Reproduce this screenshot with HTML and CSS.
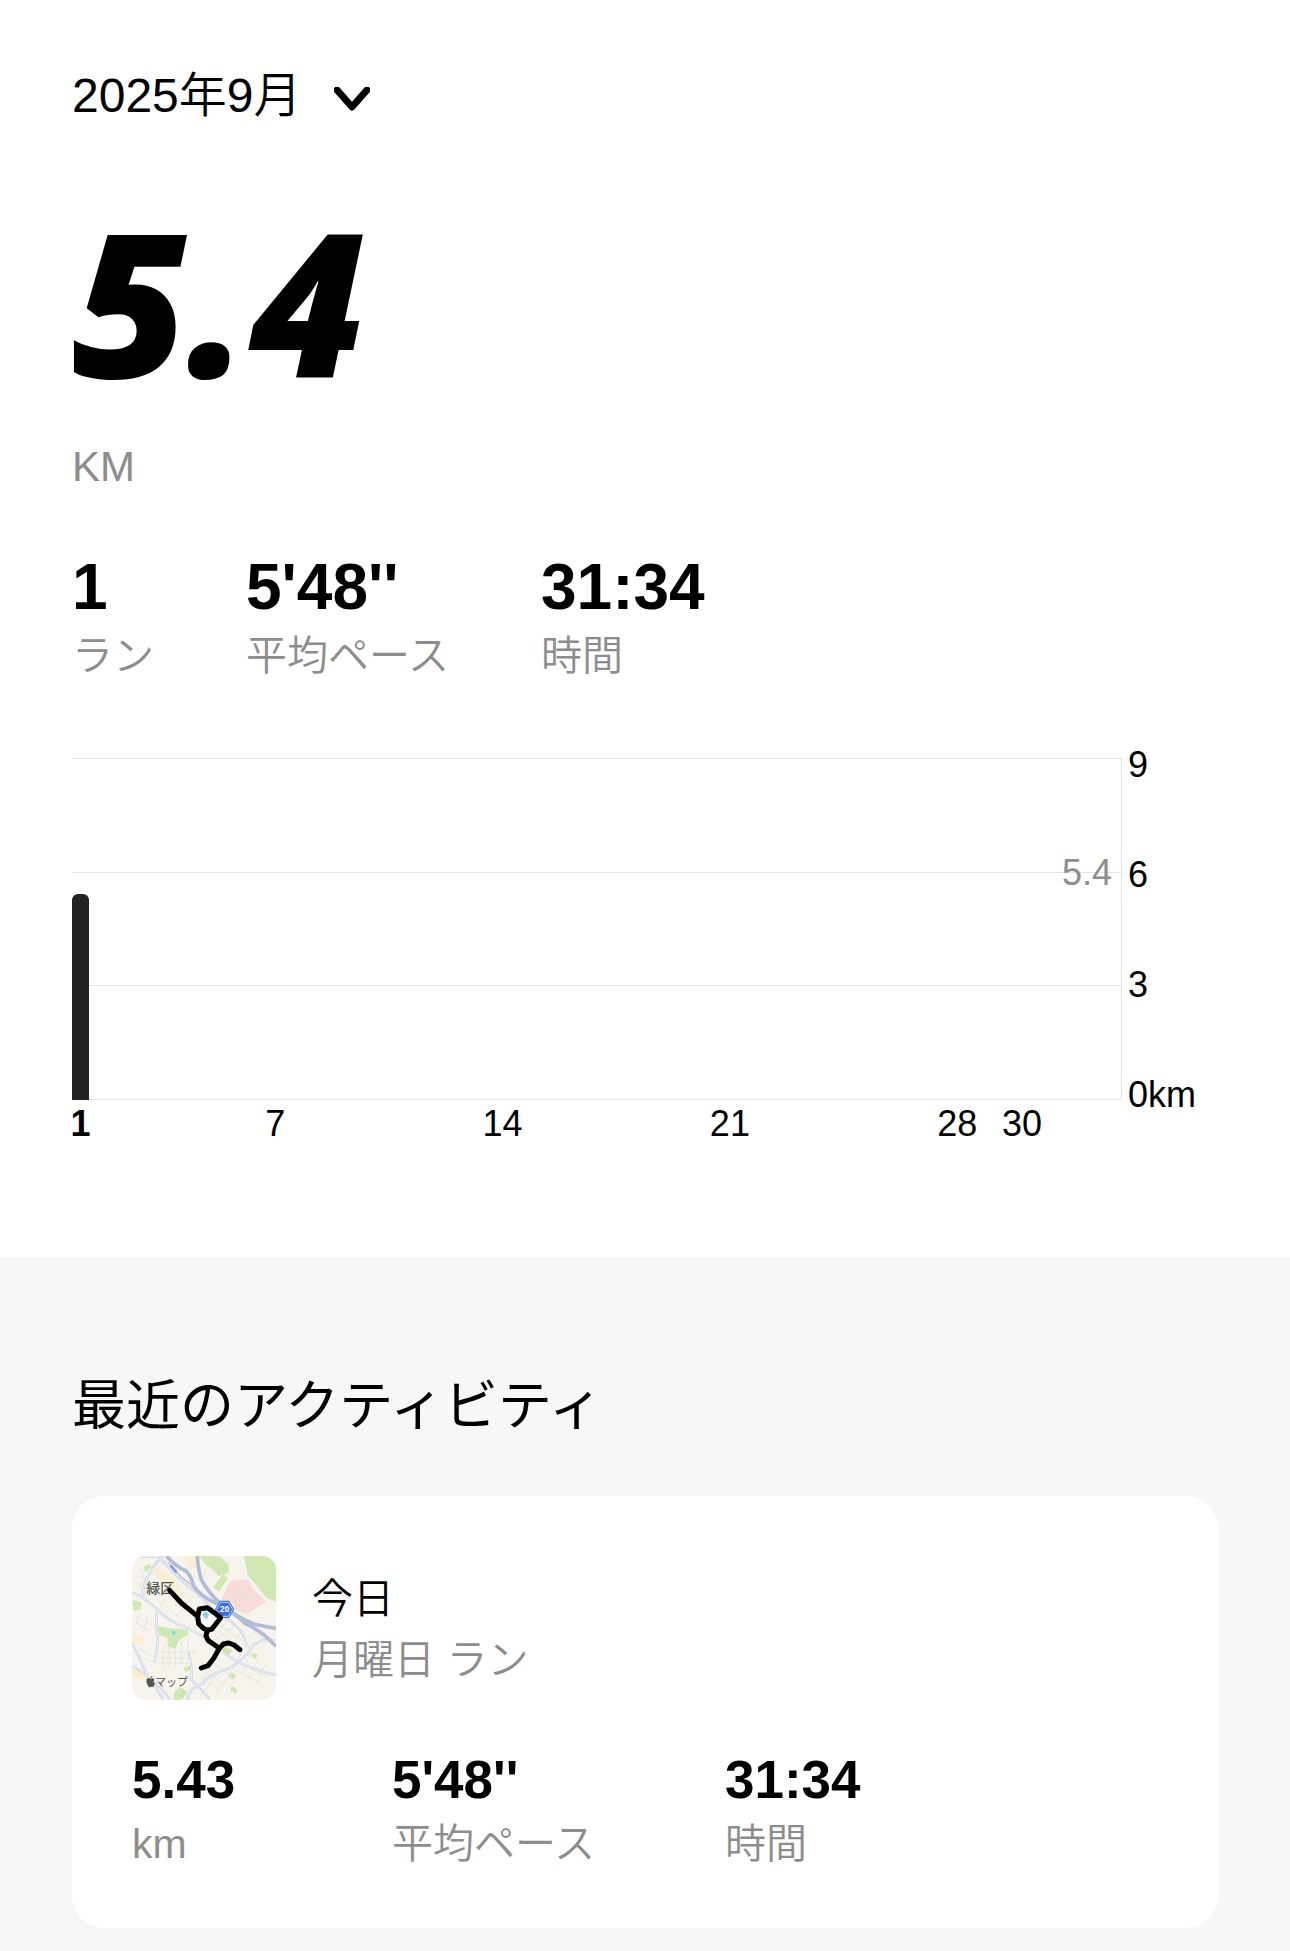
FILE: index.html
```html
<!DOCTYPE html>
<html lang="ja">

<head>
    <meta charset="UTF-8">
    <meta name="viewport" content="width=device-width, initial-scale=1.0">
    <title>アクティビティ</title>
    <link rel="stylesheet" href="styles.css">
</head>

<body>
    <section class="summary">
        <div class="month-picker">
            <select class="month-select" aria-label="月を選択">
                <option>2025年9月</option>
            </select>
            <svg class="chevron" viewBox="0 0 36 24" aria-hidden="true">
                <path d="M3 3 L18 20 L33 3" />
            </svg>
        </div>

        <div class="distance">5.4</div>
        <div class="distance-unit">KM</div>

        <div class="stats">
            <div class="stat">
                <div class="stat-value">1</div>
                <div class="stat-label">ラン</div>
            </div>
            <div class="stat">
                <div class="stat-value">5'48''</div>
                <div class="stat-label">平均ペース</div>
            </div>
            <div class="stat">
                <div class="stat-value">31:34</div>
                <div class="stat-label">時間</div>
            </div>
        </div>

        <div class="chart">
            <div class="plot">
                <div class="grid-row"></div>
                <div class="grid-row"><span class="average">5.4</span></div>
                <div class="grid-row"></div>
                <div class="bars"></div>
            </div>
            <div class="y-axis">
                <span>9</span>
                <span>6</span>
                <span>3</span>
                <span>0km</span>
            </div>
            <div class="x-axis"></div>
        </div>
    </section>

    <section class="recent">
        <h2 class="recent-title">最近のアクティビティ</h2>
        <div class="card">
            <div class="card-header">
                <svg class="map" viewBox="36 33 432 432" role="img" aria-label="ランのルート">
                    <rect x="36" y="33" width="432" height="432" fill="#f6f4ec" />
                    <!-- parks and blocks -->
                    <g fill="#cfe8b4">
                        <path d="M236 33 L300 33 L326 60 L326 84 L296 94 L276 72 L256 58 Z" />
                        <path d="M372 33 L468 33 L468 170 L440 158 L412 124 L384 92 Z" />
                        <path d="M310 88 L324 100 L296 140 L280 126 Z" />
                        <path d="M114 244 L152 250 L202 254 L206 268 L176 286 L166 312 L144 304 L142 278 L116 270 Z" />
                        <path d="M38 166 L64 172 L62 192 L42 198 Z" />
                        <path d="M72 64 L90 56 L94 70 L74 82 Z" />
                        <path d="M180 426 L204 440 L186 464 L160 464 L164 440 Z" />
                        <path d="M330 382 L350 390 L340 404 L326 396 Z" />
                        <path d="M336 424 L354 434 L346 446 L330 436 Z" />
                        <path d="M312 304 L338 314 L328 330 L308 322 Z" />
                        <path d="M400 322 L414 330 L406 342 L394 334 Z" />
                        <path d="M190 368 L212 360 L214 372 L198 380 Z" />
                    </g>
                    <path fill="#f7dcd9" d="M330 108 L384 102 L400 134 L440 170 L412 186 L380 208 L346 194 L336 172 L304 164 Z" />
                    <g fill="#faeed3">
                        <path d="M110 62 L160 100 L192 146 L180 156 L140 116 L100 84 Z" />
                        <path d="M36 264 L72 280 L64 300 L36 290 Z" />
                        <path d="M36 368 L90 396 L76 410 L36 392 Z" />
                        <path d="M196 33 L226 33 L228 66 L206 72 Z" />
                    </g>
                    <path fill="#8fd3ea" d="M156 256 L168 260 L164 270 L156 266 Z" />
                    <!-- side streets -->
                    <g class="street">
                        <path d="M46 136 L140 44 M58 148 L116 92 M60 92 L92 128 M36 96 L82 142 M76 108 L60 66" />
                        <path d="M124 322 L230 322 M116 338 L220 338 M112 354 L206 354 M130 306 L130 372 M148 310 L148 376 M166 314 L166 370 M184 290 L184 356 M204 284 L204 344" />
                        <path d="M200 130 L166 186 M220 150 L184 200 M112 164 L176 216 M92 176 L150 234 M136 160 L110 206" />
                        <path d="M300 240 L368 288 M290 258 L350 300 M320 226 L296 262 M344 238 L318 276 M368 254 L340 296 M290 284 L330 250" />
                        <path d="M232 388 L292 430 M250 372 L310 418 M280 352 L336 398 M226 430 L270 374 M252 440 L300 378 M290 440 L326 396" />
                        <path d="M366 320 L340 372 M390 330 L362 388 M414 344 L384 402 M438 356 L408 418 M350 350 L440 396 M338 372 L424 414" />
                        <path d="M48 214 L96 240 M46 232 L90 258 M60 200 L46 246 M84 214 L70 260 M54 310 L102 334 M60 336 L106 352" />
                        <path d="M386 280 L410 250 M400 300 L436 276 M340 200 L372 232 M260 66 L250 96 M350 122 L336 140 L390 160 M384 240 L430 286" />
                    </g>
                    <!-- main streets -->
                    <g class="avenue">
                        <path d="M36 142 Q76 160 112 194 T180 240 Q240 262 296 312 T468 390" />
                        <path d="M112 194 Q106 240 114 282 Q112 320 104 352 M36 296 Q60 340 78 384 L130 464" />
                        <path d="M40 36 L130 33 Q96 60 76 110 Q64 150 74 164" />
                        <path d="M468 286 Q430 280 400 300 Q380 340 328 370 Q260 390 250 416 Q210 424 202 464" />
                        <path d="M36 362 Q110 404 150 464 M206 324 Q218 370 214 404 Q240 430 270 464" />
                        <path d="M120 38 Q150 74 190 112 Q240 150 280 196 Q330 220 366 262 L384 310" />
                    </g>
                    <g class="avenue-center">
                        <path d="M36 142 Q76 160 112 194 T180 240 Q240 262 296 312 T468 390" />
                        <path d="M112 194 Q106 240 114 282 Q112 320 104 352 M36 296 Q60 340 78 384 L130 464" />
                        <path d="M40 36 L130 33 Q96 60 76 110 Q64 150 74 164" />
                        <path d="M468 286 Q430 280 400 300 Q380 340 328 370 Q260 390 250 416 Q210 424 202 464" />
                        <path d="M36 362 Q110 404 150 464 M206 324 Q218 370 214 404 Q240 430 270 464" />
                        <path d="M120 38 Q150 74 190 112 Q240 150 280 196 Q330 220 366 262 L384 310" />
                    </g>
                    <!-- expressways -->
                    <g class="highway">
                        <path d="M140 33 Q164 62 198 78 Q216 96 220 122 Q242 154 290 176 Q340 200 376 236 Q424 256 468 304" />
                        <path d="M232 33 Q234 74 244 104 Q264 144 310 184 Q360 222 404 238 Q440 246 468 250" />
                    </g>
                    <path d="M144 52 L186 98 L212 118" fill="none" stroke="#7c9be8" stroke-width="3" />
                    <path d="M152 62 L170 82" fill="none" stroke="#7c9be8" stroke-width="8" />
                    <!-- route number -->
                    <path d="M300 167 L327 167 L343 193 L327 219 L300 219 L285 193 Z" fill="#3a6fe0" />
                    <path d="M302 172 L325 172 L338 193 L325 214 L302 214 L290 193 Z" fill="none" stroke="#ffffff" stroke-width="2" />
                    <text class="route-number" x="314" y="202">20</text>
                    <text class="map-place" x="79" y="144">緑区</text>
                    <!-- run route -->
                    <path fill="#ffffff" d="M240 196 L258 188 L298 212 L294 234 L268 256 L240 232 Z" />
                    <path fill="#8fd0ea" d="M258 198 L267 208 L262 222 L254 220 L246 208 Z" />
                    <g class="route">
                        <path d="M149 136 L184 174 L233 214 L236 236 L250 250 L262 256 L276 252 L302 218 L284 204 L262 188 L238 192 L233 214" />
                        <path d="M262 256 L258 272 L264 286 L284 300 L298 310 L310 297 L326 294 L342 300 L360 314" />
                        <path d="M298 310 L282 338 L264 362 L244 369" />
                    </g>
                    <!-- map provider -->
                    <path fill="#55554f" d="M91 401 Q84 396 80 403 Q77 415 86 425 Q90 428 93 425 Q97 428 101 424 L105 416 Q98 411 103 403 Q98 397 91 401 Z M91 399 Q91 393 98 392 Q98 398 91 399 Z" />
                    <text class="map-credit" x="105" y="422">マップ</text>
                </svg>
                <div class="card-heading">
                    <div class="card-date">今日</div>
                    <div class="card-name">月曜日 ラン</div>
                </div>
            </div>
            <div class="card-stats">
                <div class="stat">
                    <div class="stat-value">5.43</div>
                    <div class="stat-label">km</div>
                </div>
                <div class="stat">
                    <div class="stat-value">5'48''</div>
                    <div class="stat-label">平均ペース</div>
                </div>
                <div class="stat">
                    <div class="stat-value">31:34</div>
                    <div class="stat-label">時間</div>
                </div>
            </div>
        </div>
    </section>

    <script>
        var DAYS_IN_MONTH = 30;
        var MAX_KM = 9;
        var TICKS = [1, 7, 14, 21, 28, 30];
        var runs = { 1: 5.43 };

        function renderChart() {
            var barsElm = document.querySelector('.bars');
            var axisElm = document.querySelector('.x-axis');

            for (var day = 1; day <= DAYS_IN_MONTH; day++) {
                var bar = document.createElement('div');
                bar.className = 'bar';
                bar.style.height = (runs[day] || 0) / MAX_KM * 100 + '%';
                barsElm.append(bar);

                var tick = document.createElement('div');
                tick.className = runs[day] ? 'tick tick-active' : 'tick';
                if (TICKS.includes(day)) {
                    tick.textContent = day;
                }
                axisElm.append(tick);
            }
        }

        renderChart();
    </script>
</body>

</html>
```
FILE: styles.css
```css
* {
    box-sizing: border-box;
}

body {
    margin: 0;
    background-color: #f7f7f7;
    color: #000;
    font-family: "Liberation Sans", "Noto Sans CJK JP", sans-serif;
    font-size: 41px;
    font-weight: 350;
}

.summary {
    padding: 66px 72px 109px;
    background-color: #fff;
}

.month-picker {
    display: flex;
    align-items: center;
    gap: 32px;
}

.month-select {
    appearance: none;
    height: 60px;
    margin: 0;
    padding: 0;
    border: none;
    background: none;
    color: inherit;
    font: inherit;
    font-size: 48px;
    line-height: 60px;
}

.chevron {
    width: 36px;
    height: 24px;
    margin-top: 6px;
    fill: none;
    stroke: #000;
    stroke-width: 7;
    stroke-linecap: round;
    stroke-linejoin: round;
}

.distance {
    margin-top: 75px;
    font-family: "Open Sans", sans-serif;
    font-size: 200px;
    font-style: italic;
    font-weight: 800;
    line-height: 200px;
}

.distance-unit {
    margin-top: 36px;
    color: #8d8d8d;
    font-size: 42px;
    line-height: 60px;
}

.stats {
    display: flex;
    gap: 92px;
    margin-top: 52px;
}

.stat-value {
    font-size: 64px;
    font-weight: bold;
    line-height: 76px;
}

.stat-label {
    color: #8d8d8d;
    line-height: 62px;
}

.chart {
    display: grid;
    grid-template-columns: 1fr 96px;
    margin-top: 71px;
    font-size: 36px;
    line-height: 48px;
}

.plot {
    position: relative;
    display: flex;
    flex-direction: column;
    height: 342px;
    border-right: 1px solid #e5e5e5;
    border-bottom: 1px solid #e5e5e5;
}

.grid-row {
    position: relative;
    flex: 1;
    border-top: 1px solid #e5e5e5;
}

.average {
    position: absolute;
    top: -24px;
    right: 9px;
    color: #8d8d8d;
}

/* bars are drawn over the grid lines */
.bars {
    position: absolute;
    top: 0;
    right: 90px;
    bottom: -1px;
    left: 0;
    display: flex;
    justify-content: space-between;
    align-items: flex-end;
}

.bar {
    width: 17px;
    border-radius: 6px 6px 0 0;
    background-color: #222;
}

.y-axis {
    display: flex;
    flex-direction: column;
    justify-content: space-between;
    margin: -17px 0 -19px;
    padding-left: 6px;
}

.x-axis {
    display: flex;
    justify-content: space-between;
    height: 48px;
    padding-right: 91px;
}

.tick {
    display: flex;
    justify-content: center;
    width: 17px;
}

.tick-active {
    font-weight: bold;
}

.recent {
    padding: 113px 72px 20px;
}

.recent-title {
    margin: 0 0 54px;
    font-size: 54px;
    font-weight: 400;
    line-height: 72px;
}

.card {
    padding: 60px 60px 53px;
    border-radius: 32px;
    background-color: #fff;
}

.card-header {
    display: flex;
    align-items: center;
    gap: 36px;
}

.card-heading {
    padding-top: 4px;
    line-height: 61px;
}

.card-name {
    color: #8d8d8d;
}

.card-stats {
    display: grid;
    grid-template-columns: 260px 333px 1fr;
    margin-top: 47px;
}

.card-stats .stat-value {
    font-size: 53px;
    line-height: 66px;
}

.map {
    width: 144px;
    height: 144px;
    border-radius: 14px;
}

.street {
    fill: none;
    stroke: #e0dfdc;
    stroke-width: 2;
}

.avenue {
    fill: none;
    stroke: #c8d0e6;
    stroke-width: 7;
}

.avenue-center {
    fill: none;
    stroke: #f3f5fc;
    stroke-width: 3;
}

.highway {
    fill: none;
    stroke: #b2bcd6;
    stroke-width: 11;
}

.route {
    fill: none;
    stroke: #000;
    stroke-width: 15;
    stroke-linecap: round;
    stroke-linejoin: round;
}

.route-number {
    fill: #fff;
    font-size: 25px;
    font-weight: bold;
    text-anchor: middle;
}

.map-place {
    fill: #55554f;
    font-size: 42px;
    font-weight: 500;
}

.map-credit {
    fill: #55554f;
    font-size: 33px;
    font-weight: 400;
}
```
